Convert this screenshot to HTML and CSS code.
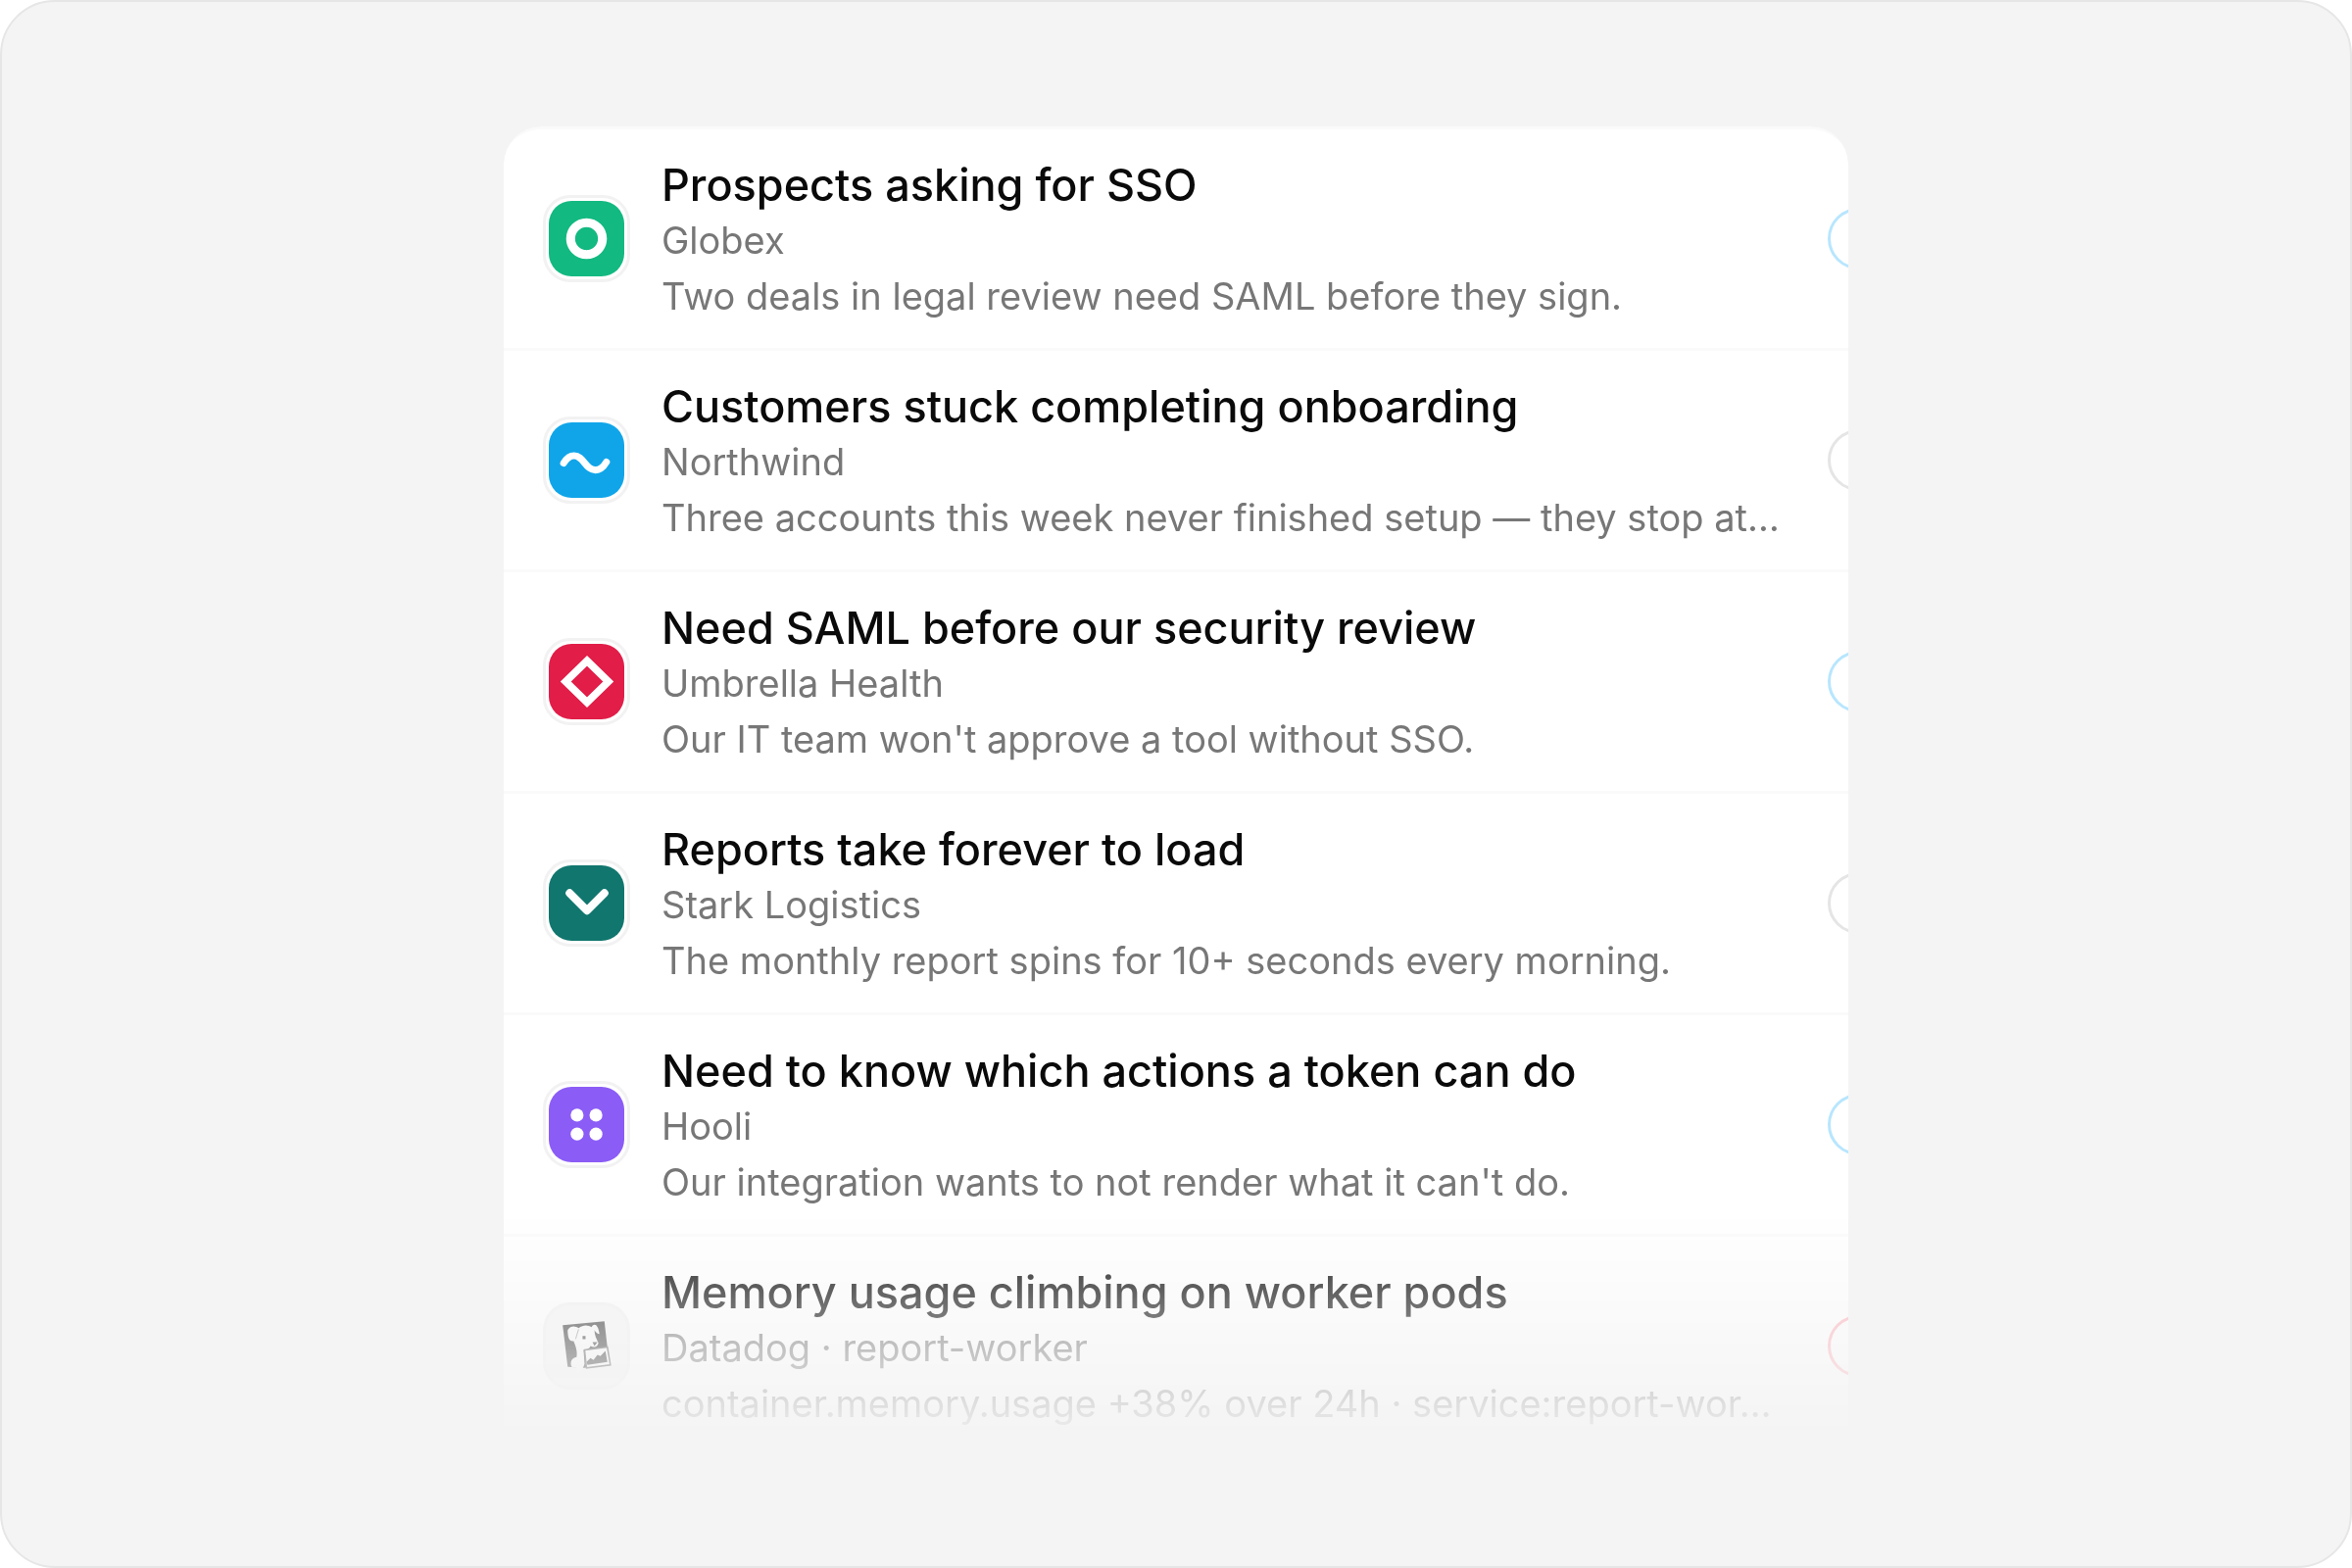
FILE: index.html
```html
<!DOCTYPE html>
<html lang="en">
<head>
  <meta charset="utf-8">
  <title>Requests</title>
  <link rel="stylesheet" href="styles.css">
</head>
<body>
<main class="stage">
  <ul class="feed">
    <li class="row">
      <span class="tile">
        <svg class="logo" viewBox="0 0 76 76" aria-hidden="true">
          <rect width="76" height="76" rx="23" fill="#12b981"/>
          <circle cx="38" cy="38" r="16" fill="none" stroke="#fff" stroke-width="9"/>
        </svg>
      </span>
      <div class="text">
        <h2 class="title">Prospects asking for SSO</h2>
        <p class="line">Globex</p>
        <p class="line">Two deals in legal review need SAML before they sign.</p>
      </div>
      <span class="pill pill-blue"></span>
    </li>
    <li class="row">
      <span class="tile">
        <svg class="logo" viewBox="0 0 76 76" aria-hidden="true">
          <rect width="76" height="76" rx="23" fill="#10a5e9"/>
          <path d="M15 41C18 36 21 33.500 25.500 33.500C35 33.500 37 48 47 48C52 48 55 45 58 40" fill="none" stroke="#fff" stroke-width="7" stroke-linecap="round"/>
        </svg>
      </span>
      <div class="text">
        <h2 class="title">Customers stuck completing onboarding</h2>
        <p class="line">Northwind</p>
        <p class="line">Three accounts this week never finished setup — they stop at…</p>
      </div>
      <span class="pill"></span>
    </li>
    <li class="row">
      <span class="tile">
        <svg class="logo" viewBox="0 0 76 76" aria-hidden="true">
          <rect width="76" height="76" rx="23" fill="#e11d48"/>
          <path d="M38.500 17L60 38L38.500 59L17 38Z" fill="none" stroke="#fff" stroke-width="7.500"/>
        </svg>
      </span>
      <div class="text">
        <h2 class="title">Need SAML before our security review</h2>
        <p class="line">Umbrella Health</p>
        <p class="line">Our IT team won't approve a tool without SSO.</p>
      </div>
      <span class="pill pill-blue"></span>
    </li>
    <li class="row">
      <span class="tile">
        <svg class="logo" viewBox="0 0 76 76" aria-hidden="true">
          <rect width="76" height="76" rx="23" fill="#10766e"/>
          <path d="M21 28L38.500 45.500L56 28" fill="none" stroke="#fff" stroke-width="8" stroke-linecap="round" stroke-linejoin="round"/>
        </svg>
      </span>
      <div class="text">
        <h2 class="title">Reports take forever to load</h2>
        <p class="line">Stark Logistics</p>
        <p class="line">The monthly report spins for 10+ seconds every morning.</p>
      </div>
      <span class="pill"></span>
    </li>
    <li class="row">
      <span class="tile">
        <svg class="logo" viewBox="0 0 76 76" aria-hidden="true">
          <rect width="76" height="76" rx="23" fill="#8b5cf6"/>
          <g fill="#fff">
            <circle cx="28.500" cy="28.500" r="6.500"/>
            <circle cx="47.500" cy="28.500" r="6.500"/>
            <circle cx="28.500" cy="47.500" r="6.500"/>
            <circle cx="47.500" cy="47.500" r="6.500"/>
          </g>
        </svg>
      </span>
      <div class="text">
        <h2 class="title">Need to know which actions a token can do</h2>
        <p class="line">Hooli</p>
        <p class="line">Our integration wants to not render what it can't do.</p>
      </div>
      <span class="pill pill-blue"></span>
    </li>
    <li class="row">
      <span class="tile tile-soft">
        <svg class="logo" viewBox="0 0 76 76" aria-hidden="true">
          <!-- frame -->
          <path d="M14 17L56 13L61 57L36 60L19 59Z" fill="#333"/>
          <!-- dog -->
          <path d="M19 22C22 17 27 18 30 20C35 16 40 17 43 19C46 14 50 17 51 26C49 26 47 24 46 22C46 27 48 31 50 35C49 39 46 40 42 38C41 41 37 42 35 42L36 56C34 62 31 65 28 65C31 61 29 60 23 59C21 54 23 50 28 49C29 43 27 38 25 33C21 34 19 30 19 22Z" fill="#fafafa"/>
          <path d="M34 28L37 28L37 31L34 31ZM44 34L49 34L46 38Z" fill="#333"/>
          <path d="M30 21L27 31" fill="none" stroke="#999" stroke-width="1"/>
          <!-- chart -->
          <path d="M36 42L59 39L62 57L38 60Z" fill="#fafafa" stroke="#555" stroke-width="1.500"/>
          <path d="M38 54L42 50L45 52L49 47L52 48L57 43L59 54L39 57Z" fill="#333"/>
        </svg>
      </span>
      <div class="text">
        <h2 class="title">Memory usage climbing on worker pods</h2>
        <p class="line">Datadog · report-worker</p>
        <p class="line">container.memory.usage +38% over 24h · service:report-wor…</p>
      </div>
      <span class="pill pill-red"></span>
    </li>
  </ul>
</main>
</body>
</html>
```
FILE: styles.css
```css
*{margin:0; padding:0; box-sizing:border-box;}
body{background:#fff; font-family:Inter, "Liberation Sans", sans-serif; font-optical-sizing:none;}
ul{list-style:none;}

.stage{
  min-height:100vh;
  padding:127px 40px 108px;
  background:#f4f4f4;
  border:2px solid #e6e6e6;
  border-radius:56px;
}

/* the list fades out at the bottom, the pills run off its right edge */
.feed{
  width:100%;
  max-width:1372px;
  margin:0 auto;
  overflow:hidden;
  background:#fff;
  border-top:3px solid #fafafa;
  border-radius:38px 38px 0 0;
  -webkit-mask-image:linear-gradient(to top, transparent 12px, #000 264px);
  mask-image:linear-gradient(to top, transparent 12px, #000 264px);
}

.row{
  display:flex;
  align-items:center;
  height:226px;
  margin-right:-179px;
  padding:0 40px;
  border-bottom:3px solid #fafafa;
}

.tile{
  flex:none;
  width:89px;
  height:89px;
  margin-right:32px;
  padding:3px;
  background:#fff;
  border:3px solid #f2f2f2;
  border-radius:28px;
}
.tile-soft{background:#f6f6f6;}
.logo{display:block; width:100%; height:100%;}

.text{flex:1; min-width:0; margin-right:36px; padding-top:5px;}
.title{
  color:#0a0a0a;
  font-size:45px;
  line-height:56px;
  font-weight:500;
}
.line{
  color:#777;
  font-size:38px;
  line-height:57px;
}
.title, .line{overflow:hidden; white-space:nowrap; text-overflow:ellipsis;}

.pill{
  flex:none;
  width:160px;
  height:63px;
  border:3px solid #e5e5e5;
  border-radius:32px;
}
.pill-blue{border-color:#b8e6fe;}
.pill-red{border-color:#ffb3bd;}
```
